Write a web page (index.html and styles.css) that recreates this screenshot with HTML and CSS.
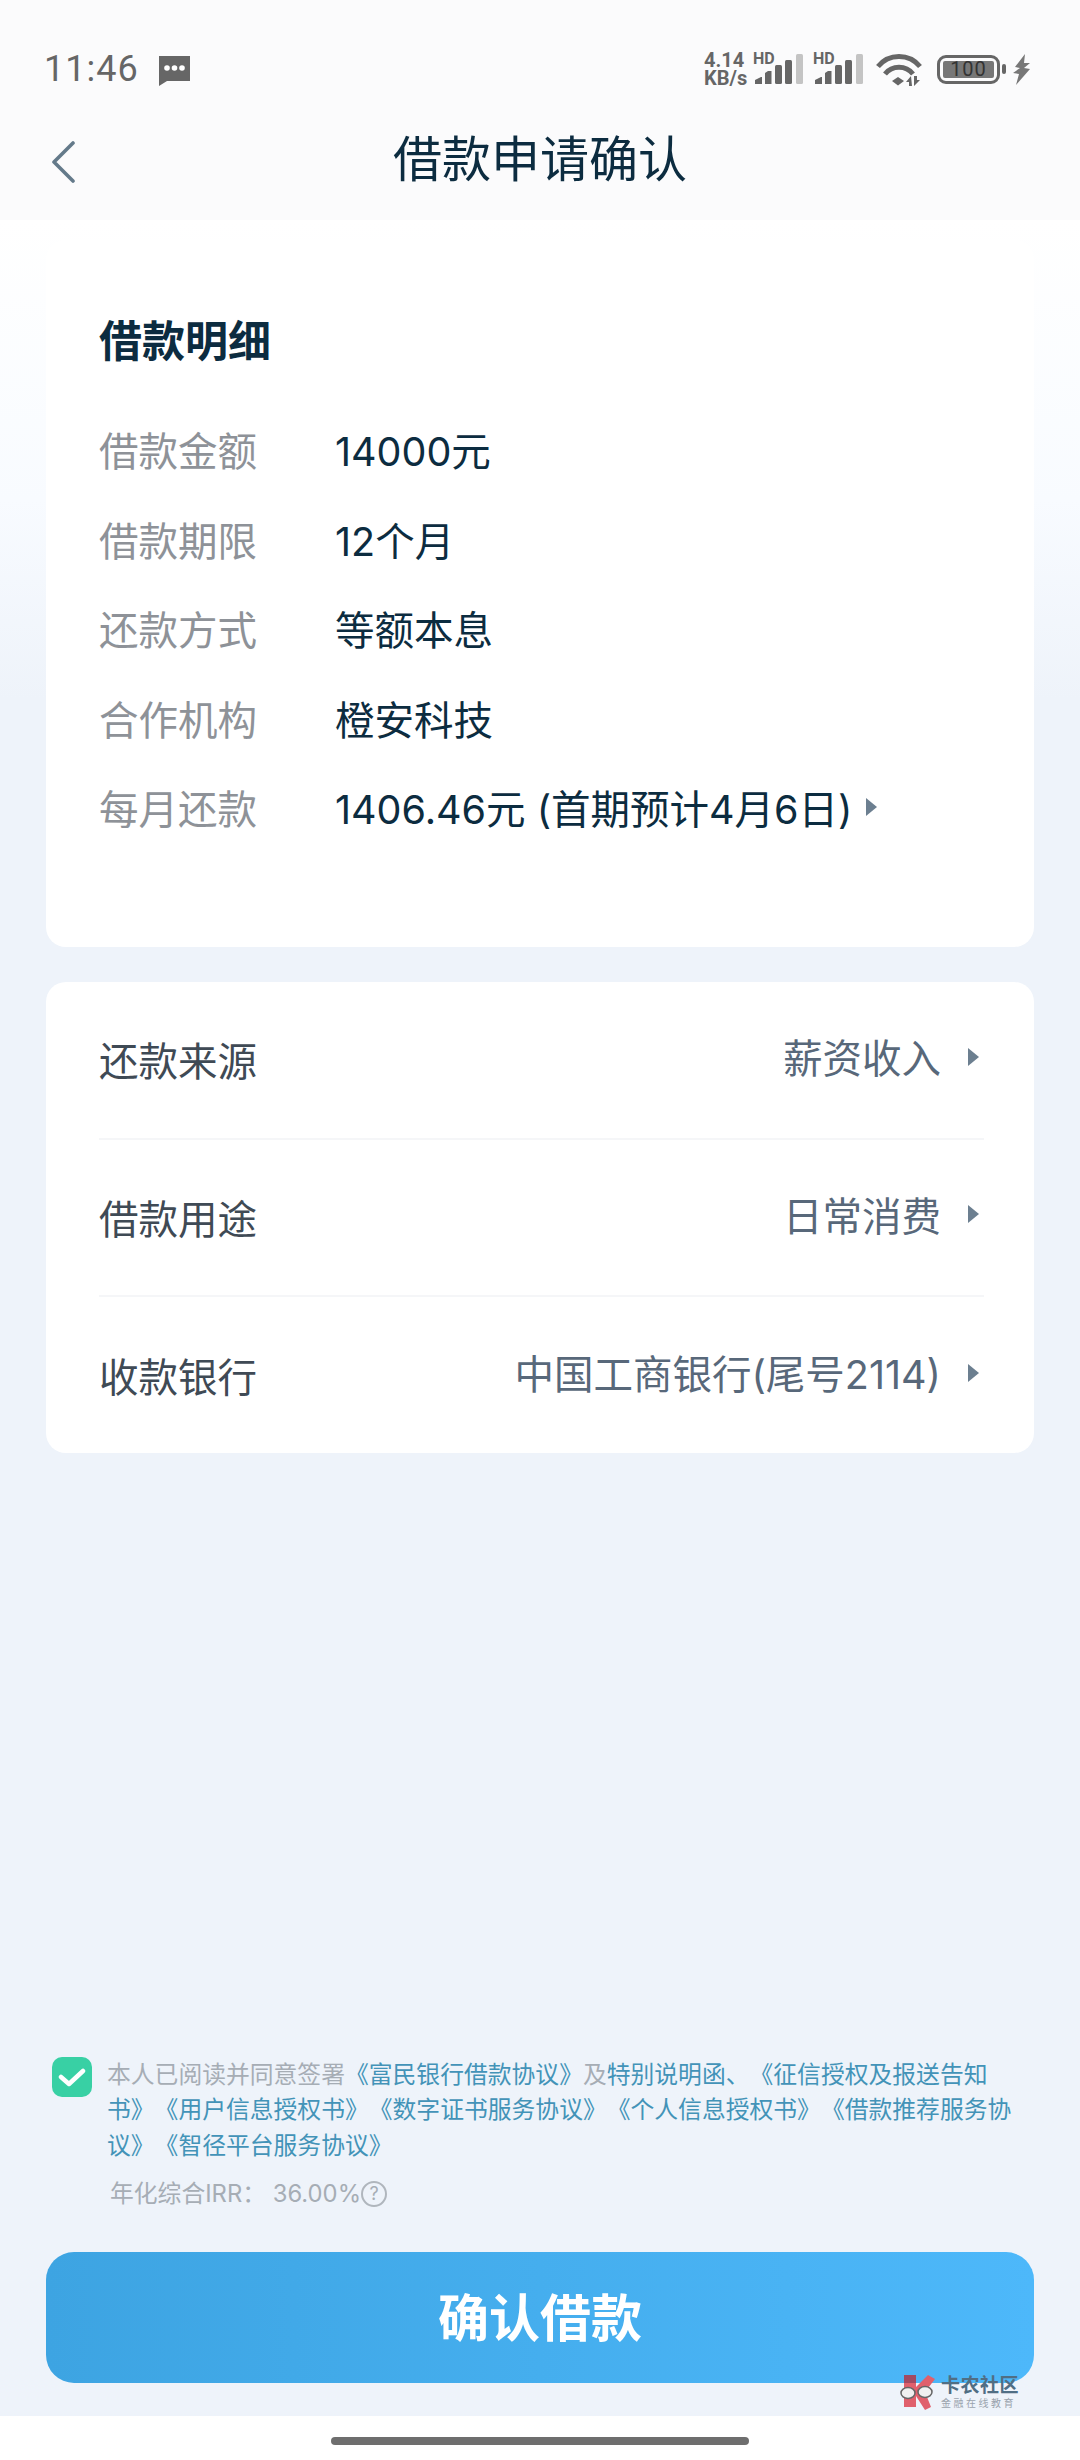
FILE: index.html
```html
<!DOCTYPE html>
<html lang="zh-CN">
<head>
<meta charset="utf-8">
<title>借款申请确认</title>
<link rel="stylesheet" href="styles.css">
</head>
<body>
<div class="phone">
  <div class="top">
    <div class="status">
      <div class="status-left">
        <span class="time">11:46</span>
        <svg class="msg" width="33" height="31" viewBox="0 0 33 31"><path d="M1 1h31v25H9l-8 5z" fill="#666"/><circle cx="9" cy="13" r="2.8" fill="#fff"/><circle cx="16.500" cy="13" r="2.8" fill="#fff"/><circle cx="24" cy="13" r="2.8" fill="#fff"/></svg>
      </div>
      <div class="status-right">
        <span class="speed"><span>4.14</span><span>KB/s</span></span>
        <span class="sig">
          <span class="hd">HD</span>
          <svg width="48" height="30" viewBox="0 0 48 30"><g fill="#666"><path d="M0 30v-4l6-3h1v7z"/><path d="M10 30V19l3-2h3.500v13z"/><rect x="20" y="11" width="7" height="19" rx="1.500"/><rect x="30" y="6" width="7" height="24" rx="1.500"/></g><rect x="41" y="0" width="7" height="30" rx="1.500" fill="#c4c4c4"/></svg>
        </span>
        <span class="sig">
          <span class="hd">HD</span>
          <svg width="48" height="30" viewBox="0 0 48 30"><g fill="#666"><path d="M0 30v-4l6-3h1v7z"/><path d="M10 30V19l3-2h3.500v13z"/><rect x="20" y="11" width="7" height="19" rx="1.500"/><rect x="30" y="6" width="7" height="24" rx="1.500"/></g><rect x="41" y="0" width="7" height="30" rx="1.500" fill="#c4c4c4"/></svg>
        </span>
        <svg class="wifi" width="46" height="33" viewBox="0 0 46 33"><g fill="none" stroke="#666" stroke-width="5"><path d="M2 13.500A27 27 0 0 1 44 13.500"/><path d="M9 21A18 18 0 0 1 37 21"/></g><path d="M16 28l6-4 6 4-6 4.500z" fill="#666"/><path d="M35 23l-5 6h3v4h3zM38 33l6-6h-3v-4h-3z" fill="#666"/></svg>
        <span class="battery"><span class="battery-body"><span class="battery-level">100</span></span><span class="battery-cap"></span></span>
        <svg class="bolt" width="18" height="31" viewBox="0 0 18 31"><path d="M12 0L2 13l5 1-7 5 6 1-3 11 14-16-6-1 6-5h-6z" fill="#777"/></svg>
      </div>
    </div>
    <div class="nav">
      <svg class="back" width="26" height="42" viewBox="0 0 26 42"><path d="M22 2L3 21l19 19" fill="none" stroke="#647a8a" stroke-width="3.600" stroke-linecap="round" stroke-linejoin="round"/></svg>
      <h1 class="title">借款申请确认</h1>
    </div>
  </div>

  <main class="content">
    <section class="card detail">
      <h2 class="detail-title">借款明细</h2>
      <div class="detail-row"><span class="detail-label">借款金额</span><span class="detail-value">14000元</span></div>
      <div class="detail-row"><span class="detail-label">借款期限</span><span class="detail-value">12个月</span></div>
      <div class="detail-row"><span class="detail-label">还款方式</span><span class="detail-value">等额本息</span></div>
      <div class="detail-row"><span class="detail-label">合作机构</span><span class="detail-value">橙安科技</span></div>
      <div class="detail-row"><span class="detail-label">每月还款</span><span class="detail-value">1406.46元 (首期预计4月6日)</span><i class="tri tri-small"></i></div>
    </section>

    <section class="card options">
      <div class="option"><span class="option-label">还款来源</span><span class="option-value">薪资收入</span><i class="tri"></i></div>
      <div class="option"><span class="option-label">借款用途</span><span class="option-value">日常消费</span><i class="tri"></i></div>
      <div class="option"><span class="option-label">收款银行</span><span class="option-value">中国工商银行(尾号2114)</span><i class="tri"></i></div>
    </section>

    <div class="spacer"></div>

    <div class="agree">
      <span class="check"><svg width="28" height="22" viewBox="0 0 28 22"><path d="M3 11l8 7L25 5" fill="none" stroke="#fff" stroke-width="4.500" stroke-linecap="round" stroke-linejoin="round"/></svg></span>
      <p class="agree-text">本人已阅读并同意签署<a>《富民银行借款协议》</a>及<a>特别说明函、《征信授权及报送告知书》《用户信息授权书》《数字证书服务协议》《个人信息授权书》《借款推荐服务协议》《智径平台服务协议》</a></p>
    </div>
    <div class="irr"><span>年化综合IRR：&nbsp;36.00%</span><span class="help">?</span></div>

    <button class="confirm">确认借款</button>
  </main>

  <div class="home"><span class="home-bar"></span></div>

  <div class="watermark">
    <svg width="38" height="36" viewBox="0 0 38 36"><path d="M5 1h12v12L29 1l7 4-10 13 6 15-6 3-9-14v11H5z" fill="#e0606c"/><path d="M5 1h12v8H5z" fill="#a24a62"/><ellipse cx="9" cy="19" rx="7" ry="5.500" fill="#f0f0f0" stroke="#666" stroke-width="1.500"/><ellipse cx="26" cy="18" rx="7" ry="5.500" fill="#f0f0f0" stroke="#666" stroke-width="1.500"/></svg>
    <span class="wm-text"><span class="wm-main">卡农社区</span><span class="wm-sub">金融在线教育</span></span>
  </div>
</div>
</body>
</html>
```

FILE: styles.css
```css
* { box-sizing: border-box; margin: 0; padding: 0; }
html, body { width: 1080px; height: 2460px; background: #fff; overflow: hidden; }
body { font-family: "Inter", "Noto Sans CJK SC", sans-serif; text-spacing-trim: space-all; }
.phone { position: relative; width: 1080px; height: 2460px; display: flex; flex-direction: column; }

.top { height: 220px; background: #fbfbfc; flex: none; }
.status { height: 100px; padding: 38px 49px 0 44px; display: flex; justify-content: space-between; align-items: center; }
.status-left { display: flex; align-items: center; gap: 19px; }
.time { font: 400 36px/40px "Roboto", sans-serif; color: #666; letter-spacing: 1px; }
.msg { margin-top: 2px; }
.status-right { display: flex; align-items: center; color: #666; }
.speed { display: flex; flex-direction: column; font: 700 20px/18px "Roboto", sans-serif; width: 42px; }
.sig { position: relative; display: block; width: 48px; height: 30px; margin-left: 12px; }
.speed + .sig { margin-left: 9px; }
.sig .hd { position: absolute; left: -2px; top: -2px; font: 700 16px/14px "Roboto", sans-serif; color: #666; }
.wifi { margin-left: 13px; }
.battery { display: flex; align-items: center; gap: 2px; margin-left: 15px; }
.battery-body { display: block; width: 63px; height: 29px; border: 3.500px solid #666; border-radius: 9px; padding: 3px; }
.battery-level { display: block; height: 100%; background: #777; border-radius: 2px; font: 400 20px/16px "Roboto", sans-serif; color: #333; text-align: center; letter-spacing: 1px; }
.battery-cap { display: block; width: 4px; height: 10px; background: #666; border-radius: 2px; }
.bolt { margin-left: 7px; }

.nav { position: relative; height: 120px; display: flex; align-items: center; justify-content: center; }
.back { position: absolute; left: 51px; top: 41px; }
.title { font-size: 49px; line-height: 60px; font-weight: 400; color: #0c2c40; }

.content { height: 2196px; flex: none; background: linear-gradient(#fff 0, #f8fbff 280px, #eef3fa 480px); padding: 20px 46px 33px; display: flex; flex-direction: column; }
.card { background: #fff; border-radius: 20px; }
.detail { height: 707px; padding: 76px 50px 0 53px; }
.detail-title { font-size: 43px; line-height: 50px; font-weight: 700; color: #0c2c40; margin-bottom: 38px; }
.detail-row { display: flex; align-items: center; height: 89.500px; }
.detail-label { width: 236px; font-size: 39.500px; color: #8e9298; }
.detail-value { font-size: 39.500px; color: #0c2c40; }
.tri { width: 0; height: 0; border-left: 11px solid #6c7f90; border-top: 9px solid transparent; border-bottom: 9px solid transparent; }
.tri-small { margin-left: 13px; }

.options { margin-top: 35px; height: 471px; padding: 0 50px 0 53px; }
.option { height: 157.500px; display: flex; align-items: center; border-bottom: 2px solid #f5f6f8; }
.option:last-child { border-bottom: 0; }
.option-label { font-size: 39.500px; color: #3f4a55; flex: 1; margin-top: -2px; }
.option-value { font-size: 39.500px; color: #58687a; margin-top: -8px; }
.option .tri { margin-left: 27px; margin-right: 5px; margin-top: -6px; }

.spacer { flex: 1; }
.agree { display: flex; gap: 15px; padding: 0 9px 0 6px; }
.check { flex: none; width: 40px; height: 40px; background: #38d0a4; border-radius: 10px; display: flex; align-items: center; justify-content: center; }
.agree-text { font-size: 23.800px; line-height: 35.500px; color: #a6adb5; }
.agree-text a { color: #4393b8; }
.irr { display: flex; align-items: center; margin: 14px 0 41px 64px; font-size: 23.800px; line-height: 34px; color: #a6adb5; }
.help { width: 26px; height: 26px; border: 2.500px solid #b0b6bd; border-radius: 50%; font-size: 18px; line-height: 21px; text-align: center; }
.confirm { height: 131px; flex: none; width: 100%; border: 0; border-radius: 28px; padding-bottom: 6px; background: linear-gradient(90deg, #3da4e2, #4db8fa); color: #fff; font: 700 51px "Noto Sans CJK SC", sans-serif; }

.home { height: 44px; flex: none; display: flex; align-items: flex-start; justify-content: center; padding-top: 21px; background: #fff; }
.home-bar { width: 418px; height: 8px; border-radius: 4px; background: #6e6e6e; }

.watermark { position: absolute; left: 899px; top: 2373px; display: flex; align-items: center; gap: 4px; }
.wm-text { display: flex; flex-direction: column; }
.wm-main { font-family: "Noto Sans CJK SC", sans-serif; font-size: 19px; line-height: 22px; font-weight: 700; color: #506e84; letter-spacing: 0.500px; }
.wm-sub { font-family: "Noto Sans CJK SC", sans-serif; font-size: 10px; line-height: 15px; color: #9aa3ad; letter-spacing: 2.500px; }
```
